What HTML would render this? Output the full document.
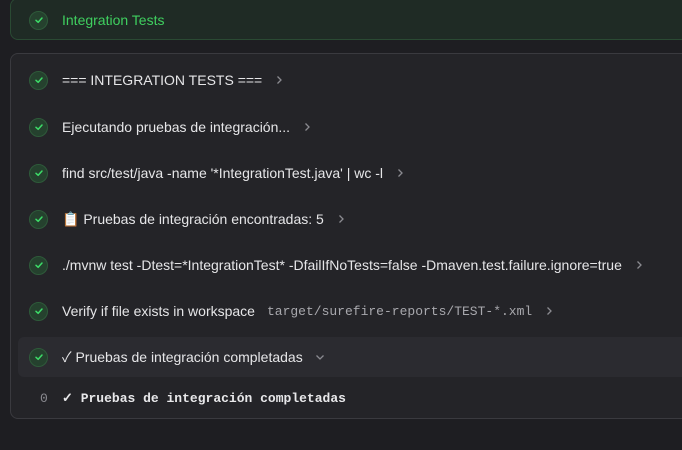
<!DOCTYPE html><html><head><style>
body{margin:0;width:682px;height:450px;background:#1e1e22;font-family:"Liberation Sans","Noto Sans CJK JP",sans-serif;overflow:hidden;position:relative;color:#e6e6e8}
.top{position:absolute;left:10px;top:-2px;width:690px;height:42px;background:#1f2b25;border:1px solid #2a4a33;border-radius:8px;box-sizing:border-box}
.card{position:absolute;left:10px;top:53px;width:690px;height:366px;background:#242428;border:1px solid #3a3a3f;border-radius:8px;box-sizing:border-box}
.row{position:absolute;left:0;height:24px;display:flex;align-items:center;font-size:14px;white-space:nowrap}
.ic{position:absolute;left:29px;width:19px;height:19px;border-radius:50%;background:#25412e;border:1px solid #2e5a3a;box-sizing:border-box;display:flex;align-items:center;justify-content:center}
.t{position:absolute;left:62px;display:flex;align-items:center}
.ch{margin-left:12px}
.mono{font-family:"Liberation Mono",monospace;color:#a8a8ad;font-size:13px;margin-left:12px}
.hl{position:absolute;left:18px;top:337px;width:680px;height:40px;background:#2b2b30;border-radius:6px}
</style></head><body>
<div class="top"></div>
<div class="card"></div>
<div class="hl"></div>
<svg width="0" height="0" style="position:absolute"><defs><symbol id="ck" viewBox="0 0 10 10"><path d="M2 5.3 4.2 7.3 8 3" fill="none" stroke="#3ddc68" stroke-width="1.5" stroke-linecap="round" stroke-linejoin="round"/></symbol><symbol id="cr" viewBox="0 0 10 10"><path d="M3.5 1.5 7 5 3.5 8.5" fill="none" stroke="#8a8a90" stroke-width="1.3"/></symbol><symbol id="cd" viewBox="0 0 10 10"><path d="M1.5 3.5 5 7 8.5 3.5" fill="none" stroke="#8a8a90" stroke-width="1.3"/></symbol></defs></svg>
<div class="row" style="top:8px"><div class="ic"><svg width="10" height="10"><use href="#ck"/></svg></div><span class="t" style="color:#3fcf5f">Integration Tests</span></div>
<div class="row" style="top:68px"><div class="ic"><svg width="10" height="10"><use href="#ck"/></svg></div><span class="t">=== INTEGRATION TESTS ===<svg class="ch" width="10" height="10"><use href="#cr"/></svg></span></div>
<div class="row" style="top:115px"><div class="ic"><svg width="10" height="10"><use href="#ck"/></svg></div><span class="t">Ejecutando pruebas de integración...<svg class="ch" width="10" height="10"><use href="#cr"/></svg></span></div>
<div class="row" style="top:161px"><div class="ic"><svg width="10" height="10"><use href="#ck"/></svg></div><span class="t">find src/test/java -name '*IntegrationTest.java' | wc -l<svg class="ch" width="10" height="10"><use href="#cr"/></svg></span></div>
<div class="row" style="top:207px"><div class="ic"><svg width="10" height="10"><use href="#ck"/></svg></div><span class="t">📋&nbsp;Pruebas de integración encontradas: 5<svg class="ch" width="10" height="10"><use href="#cr"/></svg></span></div>
<div class="row" style="top:253px"><div class="ic"><svg width="10" height="10"><use href="#ck"/></svg></div><span class="t">./mvnw test -Dtest=*IntegrationTest* -DfailIfNoTests=false -Dmaven.test.failure.ignore=true<svg class="ch" width="10" height="10"><use href="#cr"/></svg></span></div>
<div class="row" style="top:299px"><div class="ic"><svg width="10" height="10"><use href="#ck"/></svg></div><span class="t">Verify if file exists in workspace<span class="mono">target/surefire-reports/TEST-*.xml</span><svg class="ch" width="10" height="10"><use href="#cr"/></svg></span></div>
<div class="row" style="top:345px"><div class="ic"><svg width="10" height="10"><use href="#ck"/></svg></div><span class="t">✓ Pruebas de integración completadas<svg class="ch" width="10" height="10"><use href="#cd"/></svg></span></div>
<div class="row" style="top:386px;font-family:'Liberation Mono',monospace;font-size:13px"><span style="position:absolute;left:40px;color:#8a8a90">0</span><span class="t" style="font-weight:bold;color:#e8e8ea">✓ Pruebas de integración completadas</span></div>
</body></html>
